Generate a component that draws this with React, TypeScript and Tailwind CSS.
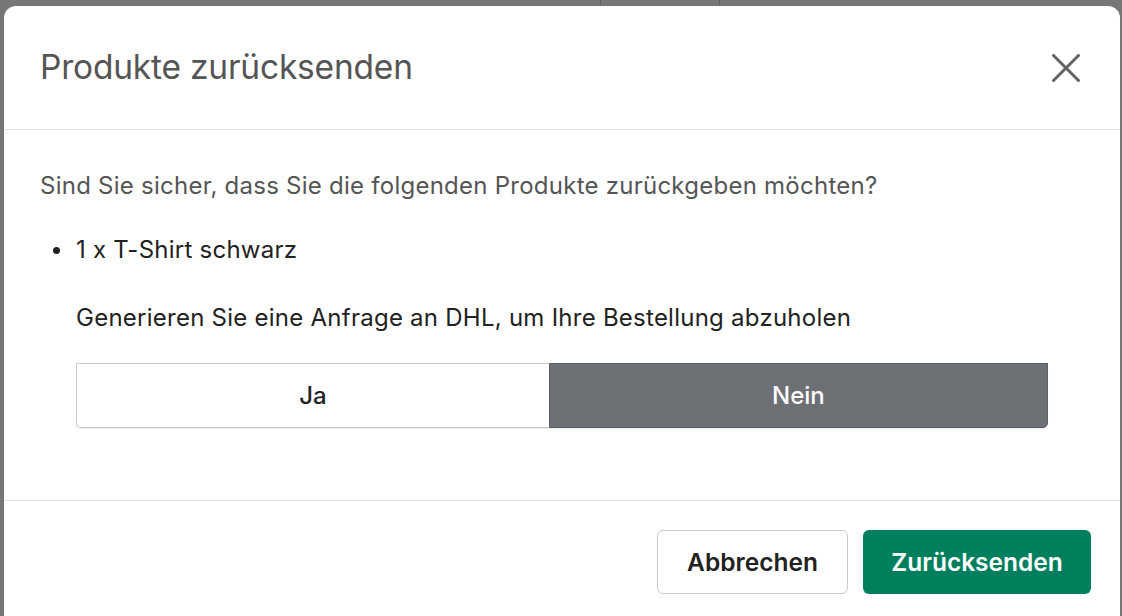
import React from "react";

export default function App() {
  return (
    <div
      className="relative h-[616px] w-[1122px] overflow-hidden bg-[#777777]"
      style={{ fontFamily: "Inter, 'Noto Sans', sans-serif" }}
    >
      <div className="flex h-[6px]">
        <div className="w-[601px] border-r border-[#5f5f5f]" />
        <div className="w-[119px] border-r border-[#5f5f5f]" />
        <div className="flex-1" />
      </div>
      <div className="ml-[4px] h-[700px] w-[1116px] rounded-t-[12px] bg-white">
        {/* Header */}
        <div className="flex h-[124px] items-center justify-between border-b border-[#e3e3e3] pl-[36px] pr-[40px]">
          <h2 className="text-[33.5px] font-normal leading-none tracking-[-0.2px] text-[#555555]">
            Produkte zurücksenden
          </h2>
          <button className="flex h-[28px] w-[28px] items-center justify-center">
            <svg width="28" height="28" viewBox="0 0 28 28" fill="none">
              <path
                d="M1.5 1.5L26.5 26.5M26.5 1.5L1.5 26.5"
                stroke="#636363"
                strokeWidth="3"
                strokeLinecap="round"
              />
            </svg>
          </button>
        </div>

        {/* Body */}
        <div className="border-b border-[#e3e3e3] px-[36px] pb-[72px] pt-[40px]">
          <p className="text-[24px] leading-[32px] tracking-[0.25px] text-[#555555]">
            Sind Sie sicher, dass Sie die folgenden Produkte zurückgeben möchten?
          </p>
          <div className="mt-[32px] flex items-center text-[24px] leading-[32px] tracking-[0.25px] text-[#222222]">
            <span className="ml-[13px] mr-[16px] h-[7px] w-[7px] rounded-full bg-[#222222]" />
            <span>1 x T-Shirt schwarz</span>
          </div>
          <div className="mx-[36px]">
            <p className="mt-[36px] text-[24px] leading-[32px] tracking-[0.25px] text-[#222222]">
              Generieren Sie eine Anfrage an DHL, um Ihre Bestellung abzuholen
            </p>
            <div className="mt-[29px] flex h-[65px] rounded-b-[5px] shadow-[0_1px_1px_rgba(0,0,0,0.08)]">
              <button className="flex flex-auto items-center justify-center rounded-bl-[5px] border border-r-0 border-[#cacaca] bg-white text-[24px] font-medium text-[#222222]">
                Ja
              </button>
              <button className="flex flex-auto items-center justify-center rounded-br-[5px] border border-[#5c5f63] bg-[#6d7075] text-[24px] font-medium text-white">
                Nein
              </button>
            </div>
          </div>
        </div>

        {/* Footer */}
        <div className="flex justify-end gap-[15px] pr-[29px] pt-[29px]">
          <button className="flex h-[64px] w-[191px] items-center justify-center rounded-[6px] border border-[#c9c9c9] bg-white text-[24.5px] font-semibold text-[#222222]">
            Abbrechen
          </button>
          <button className="flex h-[64px] w-[228px] items-center justify-center rounded-[6px] bg-[#007f5f] text-[24.5px] font-semibold text-white">
            Zurücksenden
          </button>
        </div>
      </div>
    </div>
  );
}
